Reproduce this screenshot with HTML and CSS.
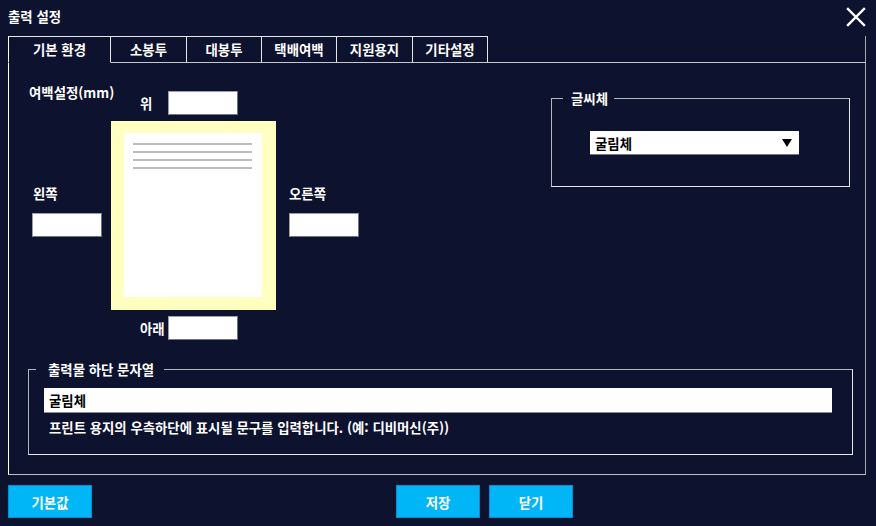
FILE: index.html
```html
<!DOCTYPE html>
<html lang="ko">
<head>
<meta charset="utf-8">
<title>출력 설정</title>
<link rel="stylesheet" href="styles.css">
</head>
<body>
<div class="dialog">
  <header class="titlebar">
    <div class="title">출력 설정</div>
    <svg class="close" width="20" height="20" viewBox="0 0 20 20" aria-label="닫기">
      <path d="M2 2 L18 18 M18 2 L2 18" stroke="#ffffff" stroke-width="2.4" stroke-linecap="square" fill="none"/>
    </svg>
  </header>

  <nav class="tabs">
    <div class="tab active t1">기본 환경</div>
    <div class="tab t2">소봉투</div>
    <div class="tab t3">대봉투</div>
    <div class="tab t4">택배여백</div>
    <div class="tab t5">지원용지</div>
    <div class="tab t6">기타설정</div>
    <div class="tab-fill"></div>
  </nav>

  <section class="panel">
    <div class="top-row">
      <div class="margin-grid">
        <div class="mg-heading">여백설정(mm)</div>
        <div class="mg-top">
          <span class="mg-label">위</span>
          <div class="field"></div>
        </div>
        <div class="mg-side mg-left">
          <span class="side-label">왼쪽</span>
          <div class="field"></div>
        </div>
        <div class="paper">
          <div class="sheet">
            <div class="line"></div>
            <div class="line"></div>
            <div class="line"></div>
            <div class="line"></div>
          </div>
        </div>
        <div class="mg-side mg-right">
          <span class="side-label">오른쪽</span>
          <div class="field"></div>
        </div>
        <div class="mg-bottom">
          <span class="mg-label">아래</span>
          <div class="field"></div>
        </div>
      </div>

      <fieldset class="group font-group">
        <legend>글씨체</legend>
        <div class="select">
          <span class="select-text">굴림체</span>
          <svg class="arrow" width="10" height="8" viewBox="0 0 10 8"><polygon points="0,0 10,0 5,8" fill="#000"/></svg>
        </div>
      </fieldset>
    </div>

    <fieldset class="group footer-group">
      <legend>출력물 하단 문자열</legend>
      <div class="text-field">굴림체</div>
      <p class="help">프린트 용지의 우측하단에 표시될 문구를 입력합니다. (예: 디비머신(주))</p>
    </fieldset>
  </section>

  <footer class="buttons">
    <button class="btn">기본값</button>
    <div class="btn-group">
      <button class="btn">저장</button>
      <button class="btn">닫기</button>
    </div>
  </footer>
</div>
</body>
</html>
```

FILE: styles.css
```css
* { box-sizing: border-box; }

html, body {
  margin: 0;
  padding: 0;
  width: 876px;
  height: 526px;
  overflow: hidden;
  background: #0d122e;
}

body {
  font-family: "Noto Sans CJK KR", "Noto Sans", sans-serif;
  font-size: 13.4px;
  font-weight: 700;
  line-height: 16px;
  color: #ffffff;
}

.dialog {
  width: 876px;
  height: 526px;
}

.titlebar {
  height: 36px;
  display: flex;
  justify-content: space-between;
  align-items: flex-start;
  padding: 0 10px 0 8px;
}

.title {
  margin-top: 8px;
}

.close {
  margin-top: 7px;
  display: block;
}

/* tabs */
.tabs {
  display: flex;
  height: 27px;
  margin-left: 8px;
  width: 858px;
}

.tab {
  height: 27px;
  border: 1px solid #e6e6e6;
  border-left: none;
  border-bottom-color: #c8c8c8;
  display: flex;
  align-items: center;
  justify-content: center;
  padding-bottom: 1px;
}

.tab.active {
  border-left: 1px solid #ffffff;
  border-bottom-color: transparent;
}

.t1 { width: 103px; }
.t2 { width: 76px; }
.t3 { width: 75px; }
.t4 { width: 75px; }
.t5 { width: 76px; }
.t6 { width: 75px; }

.tab-fill {
  flex: 1;
  height: 27px;
  border-bottom: 1px solid #c8c8c8;
  border-right: 1px solid #a8a8a8;
}

/* panel */
.panel {
  margin-left: 8px;
  width: 858px;
  height: 412px;
  border: 1px solid #a8a8a8;
  border-top: none;
  border-left-color: #ffffff;
  border-bottom-color: #c0c0c0;
  padding: 21px 15px 0 20px;
}

.top-row {
  display: flex;
  justify-content: space-between;
  align-items: flex-start;
}

.margin-grid {
  display: grid;
  grid-template-columns: 3px 70px 9px 165px 13px 70px;
  grid-template-rows: 37px 189px auto;
}

.mg-heading {
  grid-column: 1 / 4;
  grid-row: 1;
  white-space: nowrap;
  align-self: start;
}

.mg-top {
  grid-column: 4;
  grid-row: 1;
  align-self: end;
  margin-bottom: 6px;
  display: flex;
  align-items: center;
  padding-left: 29px;
}

.mg-bottom {
  grid-column: 4;
  grid-row: 3;
  margin-top: 6px;
  display: flex;
  align-items: center;
  padding-left: 29px;
}

.mg-label {
  width: 28px;
}

.field {
  width: 70px;
  height: 24px;
  background: #ffffff;
  border: 1px solid #6f7486;
  border-top-color: #9a9eab;
  border-left-color: #9a9eab;
}

.mg-side {
  grid-row: 2;
  padding-top: 64px;
  display: flex;
  flex-direction: column;
}

.mg-left { grid-column: 2; }
.mg-right { grid-column: 6; }

.side-label {
  margin-bottom: 12px;
  padding-left: 1px;
}

.mg-right .side-label { padding-left: 0; }

.paper {
  grid-column: 4;
  grid-row: 2;
  background: #ffffc2;
  padding: 12px 14px 13px 13px;
}

.sheet {
  height: 164px;
  background: #ffffff;
  padding: 10px 10px 0 9px;
  display: flex;
  flex-direction: column;
  gap: 6px;
}

.line {
  height: 2px;
  background: #bdbdbd;
}

/* groups */
.group {
  margin: 0;
  min-width: 0;
  border: 1px solid #b4b6bd;
  border-bottom-color: #e8e8e8;
  border-right-color: #e8e8e8;
}

.group legend {
  line-height: 16px;
}

.font-group {
  width: 299px;
  margin-top: 6px;
  padding: 25px 0 31px 38px;
}

.font-group legend {
  margin-left: -27px;
  padding: 0 6px 0 8px;
}

.select {
  width: 209px;
  height: 24px;
  background: #ffffff;
  border-bottom: 1px solid #6f7486;
  display: flex;
  align-items: center;
  justify-content: space-between;
  padding: 0 7px 0 5px;
  color: #000000;
}

.arrow { display: block; }

.footer-group {
  width: 825px;
  margin: 21px 0 0 -1px;
  padding: 11px 21px 19px 15px;
}

.footer-group legend {
  margin-left: -8px;
  padding: 0 10px 0 12px;
}

.text-field {
  width: 788px;
  height: 25px;
  background: #ffffff;
  color: #000000;
  border-bottom: 1px solid #8a8e9c;
  padding-left: 5px;
  display: flex;
  align-items: center;
}

.help {
  margin: 6px 0 0;
  padding-left: 5px;
}

/* buttons */
.buttons {
  display: flex;
  margin-top: 10px;
  padding-left: 8px;
}

.btn-group {
  display: flex;
  gap: 9px;
  margin-left: 304px;
}

.btn {
  width: 84px;
  height: 33px;
  background: #00b6f7;
  border: 1px solid #0a8cd0;
  color: #ffffff;
  font-family: inherit;
  font-size: 13.4px;
  font-weight: 700;
  line-height: 16px;
  padding: 0;
  cursor: pointer;
}
```
